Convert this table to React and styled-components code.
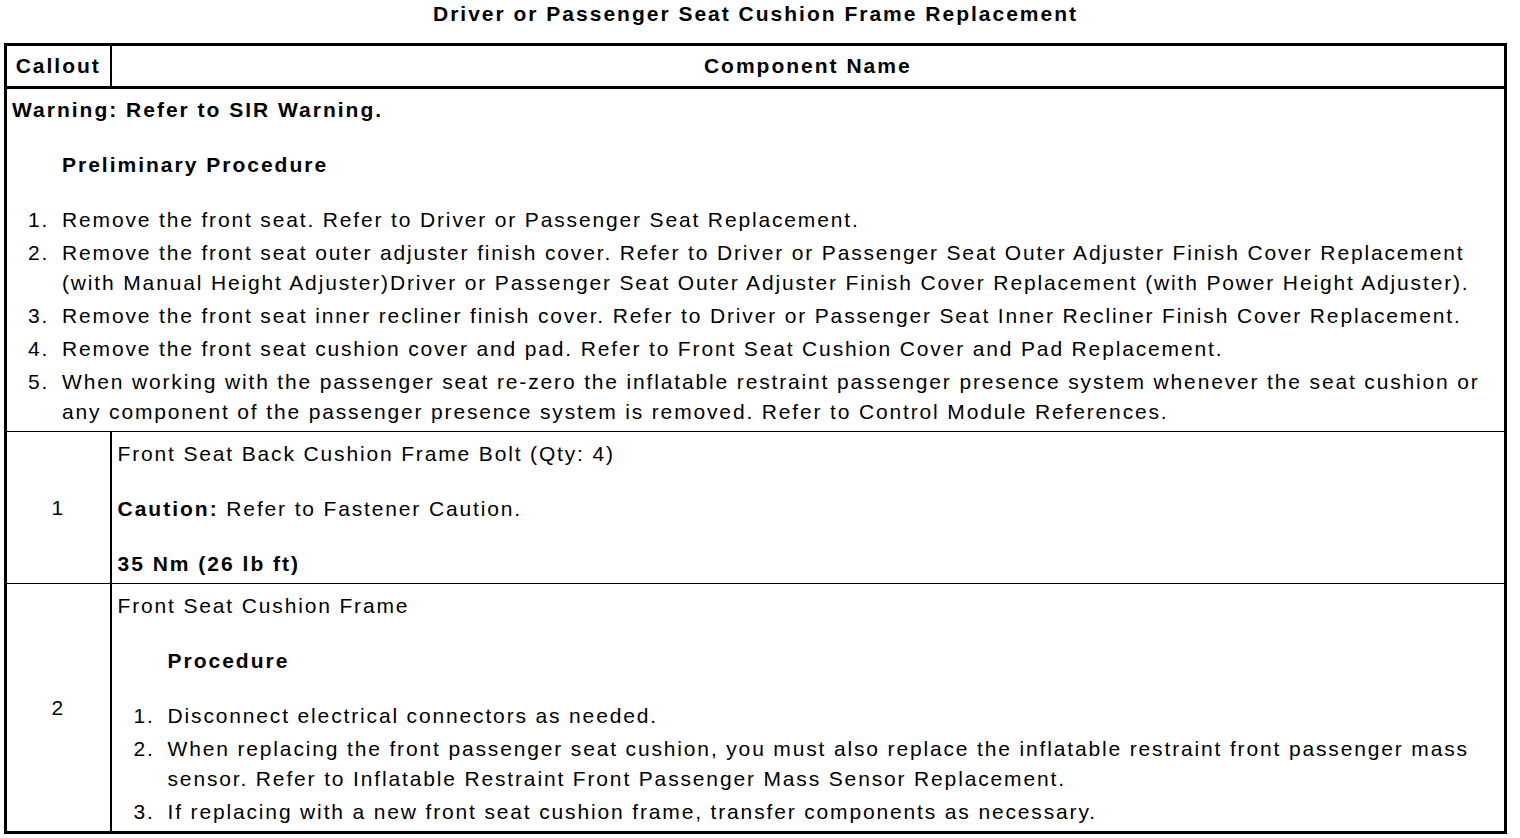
import React from "react";
import styled, { createGlobalStyle } from "styled-components";

const Global = createGlobalStyle`
  html, body { margin: 0; padding: 0; background: #fff; }
  body { font-family: "Liberation Sans", Arial, Helvetica, sans-serif; color: #000; }
`;

const Page = styled.div`
  padding: 0 13px 0 4px;
  width: 1520px;
  box-sizing: border-box;
`;

const Title = styled.h1`
  margin: 0 0 15px;
  font-size: 21px;
  line-height: 28px;
  font-weight: bold;
  letter-spacing: 2px;
  text-align: center;
`;

const Table = styled.table`
  width: 100%;
  border-collapse: collapse;
  border: 3px solid #000;
  font-size: 21px;
  line-height: 30px;
  letter-spacing: 1.85px;
`;

const HeadCell = styled.th`
  font-weight: bold;
  letter-spacing: 2px;
  text-align: center;
  padding: 5px 6px;
  height: 40px;
  box-sizing: border-box;
  border-bottom: 3px solid #000;
  border-right: ${(p) => (p.$first ? "2px solid #000" : "none")};
  width: ${(p) => (p.$first ? "105px" : "auto")};
`;

const Row = styled.tr`
  border-top: 1px solid #000;
`;

const CalloutCell = styled.td`
  text-align: center;
  vertical-align: middle;
  border-right: 2px solid #000;
  padding: 0;
`;

const ContentCell = styled.td`
  vertical-align: top;
  padding: ${(p) => p.$pad || "7px 6px 4px 6px"};
`;

const Para = styled.p`
  margin: 0 0 25px;
  font-weight: ${(p) => (p.$bold ? "bold" : "normal")};
  letter-spacing: ${(p) => (p.$bold ? "2px" : "inherit")};
  padding-left: ${(p) => (p.$indent ? "50px" : "0")};
  &:last-child { margin-bottom: 0; }
`;

const B = styled.b`
  font-weight: bold;
  letter-spacing: 2px;
`;

const List = styled.ol`
  list-style: none;
  margin: 0;
  padding: 0;
`;

const Item = styled.li`
  display: flex;
  margin-bottom: 3px;
  &:last-child { margin-bottom: 0; }
`;

const Num = styled.span`
  flex: 0 0 50px;
  box-sizing: border-box;
  padding-left: 16px;
`;

const ItemText = styled.span`
  flex: 1;
`;

const prelim = [
  "Remove the front seat. Refer to Driver or Passenger Seat Replacement.",
  "Remove the front seat outer adjuster finish cover. Refer to Driver or Passenger Seat Outer Adjuster Finish Cover Replacement (with Manual Height Adjuster)Driver or Passenger Seat Outer Adjuster Finish Cover Replacement (with Power Height Adjuster).",
  "Remove the front seat inner recliner finish cover. Refer to Driver or Passenger Seat Inner Recliner Finish Cover Replacement.",
  "Remove the front seat cushion cover and pad. Refer to Front Seat Cushion Cover and Pad Replacement.",
  "When working with the passenger seat re-zero the inflatable restraint passenger presence system whenever the seat cushion or any component of the passenger presence system is removed. Refer to Control Module References.",
];

const proc = [
  "Disconnect electrical connectors as needed.",
  "When replacing the front passenger seat cushion, you must also replace the inflatable restraint front passenger mass sensor. Refer to Inflatable Restraint Front Passenger Mass Sensor Replacement.",
  "If replacing with a new front seat cushion frame, transfer components as necessary.",
];

const Steps = ({ items }) => (
  <List>
    {items.map((t, i) => (
      <Item key={i}>
        <Num>{i + 1}.</Num>
        <ItemText>{t}</ItemText>
      </Item>
    ))}
  </List>
);

export default function App() {
  return (
    <Page>
      <Global />
      <Title>Driver or Passenger Seat Cushion Frame Replacement</Title>
      <Table>
        <thead>
          <tr>
            <HeadCell $first>Callout</HeadCell>
            <HeadCell>Component Name</HeadCell>
          </tr>
        </thead>
        <tbody>
          <tr>
            <ContentCell colSpan={2} $pad="6px 6px 4px 5px">
              <Para $bold>Warning: Refer to SIR Warning.</Para>
              <Para $bold $indent>Preliminary Procedure</Para>
              <Steps items={prelim} />
            </ContentCell>
          </tr>
          <Row>
            <CalloutCell>1</CalloutCell>
            <ContentCell>
              <Para>Front Seat Back Cushion Frame Bolt (Qty: 4)</Para>
              <Para>
                <B>Caution:</B> Refer to Fastener Caution.
              </Para>
              <Para $bold>35 Nm (26 lb ft)</Para>
            </ContentCell>
          </Row>
          <Row>
            <CalloutCell>2</CalloutCell>
            <ContentCell>
              <Para>Front Seat Cushion Frame</Para>
              <Para $bold $indent>Procedure</Para>
              <Steps items={proc} />
            </ContentCell>
          </Row>
        </tbody>
      </Table>
    </Page>
  );
}
